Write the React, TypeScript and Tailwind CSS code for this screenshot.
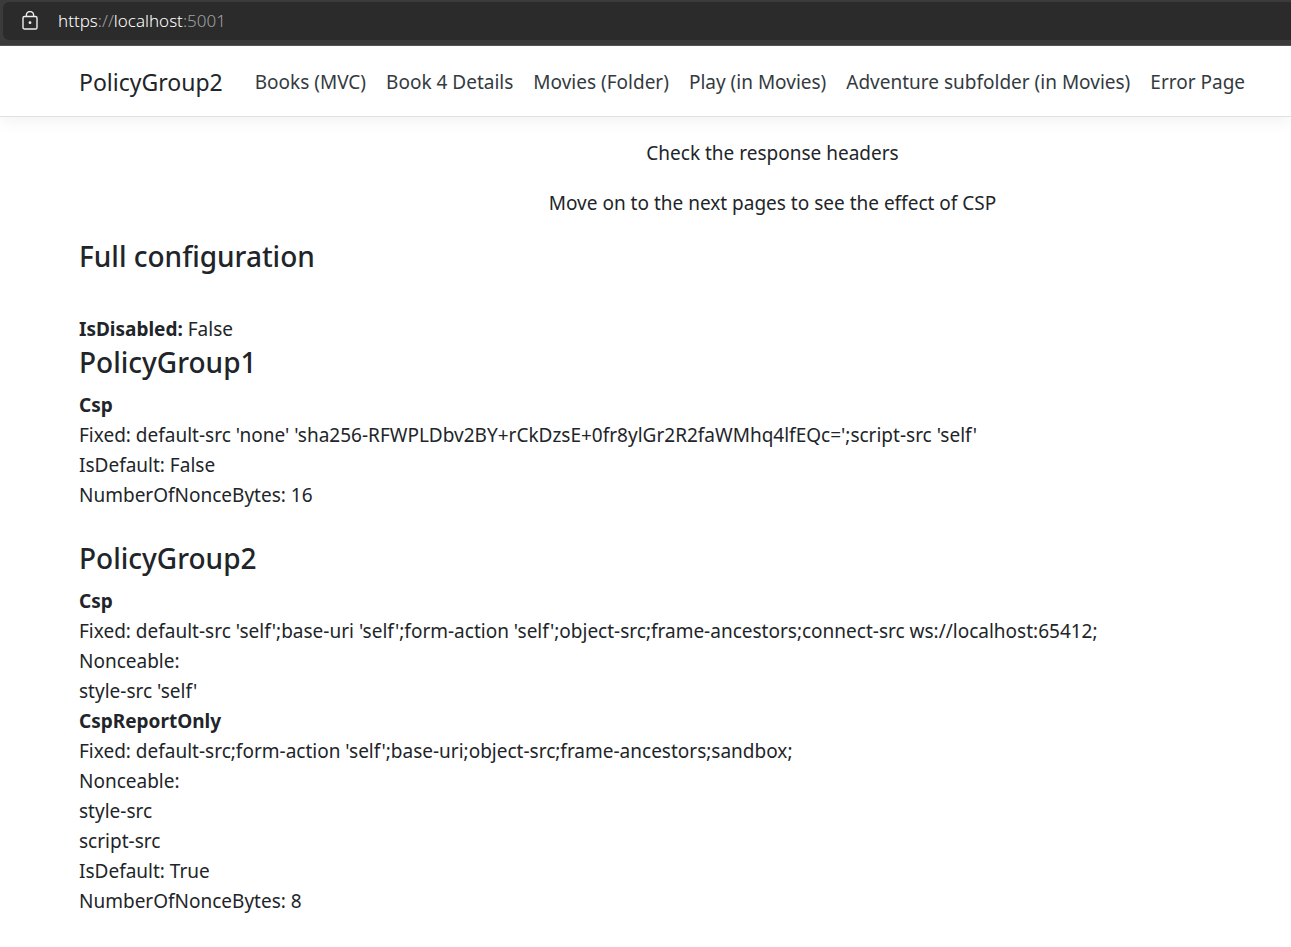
import type { ReactNode } from 'react';

const navItems = [
  'Books (MVC)',
  'Book 4 Details',
  'Movies (Folder)',
  'Play (in Movies)',
  'Adventure subfolder (in Movies)',
  'Error Page',
];

function AddressBar() {
  return (
    <div className="border-b border-[#555555] bg-[#3b3b3b] pt-0.5 pb-[5px] pl-[3px]">
      <div className="flex h-[38px] items-center gap-5 rounded-l-md bg-[#2b2b2b] pl-[19px] text-[17px]">
        <svg className="h-5 w-4" viewBox="0 0 16 20" fill="none" stroke="#eeeeee" strokeWidth="1.4" aria-hidden="true">
          <rect x="1" y="5.5" width="14" height="12.5" rx="1.6" />
          <path d="M4.4 5.5V3.9a3.6 3.4 0 0 1 7.2 0v1.6" />
          <circle cx="8" cy="11.7" r="1.4" fill="#eeeeee" stroke="none" />
        </svg>
        <div className="leading-6 font-light text-[#a0a0a0]">
          <span className="text-white">https</span>://<span className="text-white">localhost</span>:5001
        </div>
      </div>
    </div>
  );
}

function Heading({ children }: { children: ReactNode }) {
  return <h4 className="mb-2.5 text-[28px] leading-9 font-medium">{children}</h4>;
}

function Policy({ name, children }: { name: string; children: ReactNode }) {
  return (
    <section className="mb-[30px]">
      <Heading>{name}</Heading>
      {children}
    </section>
  );
}

export default function App() {
  return (
    <div className="min-h-screen bg-white font-['Noto_Sans',sans-serif] text-[19px] leading-[30px] text-[#212529]">
      <AddressBar />
      <header className="border-b border-[#dee2e6] shadow-[0_5px_15px_rgba(0,0,0,0.05)]">
        <nav className="flex h-[70px] items-center gap-8 pt-0.5 pl-[79px] whitespace-nowrap">
          <a href="#" className="text-[23px]">PolicyGroup2</a>
          <div className="flex gap-5 text-[#343a40]">
            {navItems.map((item) => (
              <a key={item} href="#">{item}</a>
            ))}
          </div>
        </nav>
      </header>
      <main className="pt-[21px] pb-1 pl-[79px]">
        <div className="pl-[175px] text-center">
          <p className="mb-5">Check the response headers</p>
          <p className="mb-5">Move on to the next pages to see the effect of CSP</p>
        </div>
        <div className="pb-[30px]">
          <Heading>Full configuration</Heading>
        </div>
        <div>
          <b className="font-bold">IsDisabled:</b> False
        </div>
        <Policy name="PolicyGroup1">
          <div className="font-bold">Csp</div>
          <div>Fixed: default-src 'none' 'sha256-RFWPLDbv2BY+rCkDzsE+0fr8ylGr2R2faWMhq4lfEQc=';script-src 'self'</div>
          <div>IsDefault: False</div>
          <div>NumberOfNonceBytes: 16</div>
        </Policy>
        <Policy name="PolicyGroup2">
          <div className="font-bold">Csp</div>
          <div>Fixed: default-src 'self';base-uri 'self';form-action 'self';object-src;frame-ancestors;connect-src ws://localhost:65412;</div>
          <div>Nonceable:</div>
          <div>style-src 'self'</div>
          <div className="font-bold">CspReportOnly</div>
          <div>Fixed: default-src;form-action 'self';base-uri;object-src;frame-ancestors;sandbox;</div>
          <div>Nonceable:</div>
          <div>style-src</div>
          <div>script-src</div>
          <div>IsDefault: True</div>
          <div>NumberOfNonceBytes: 8</div>
        </Policy>
      </main>
    </div>
  );
}
